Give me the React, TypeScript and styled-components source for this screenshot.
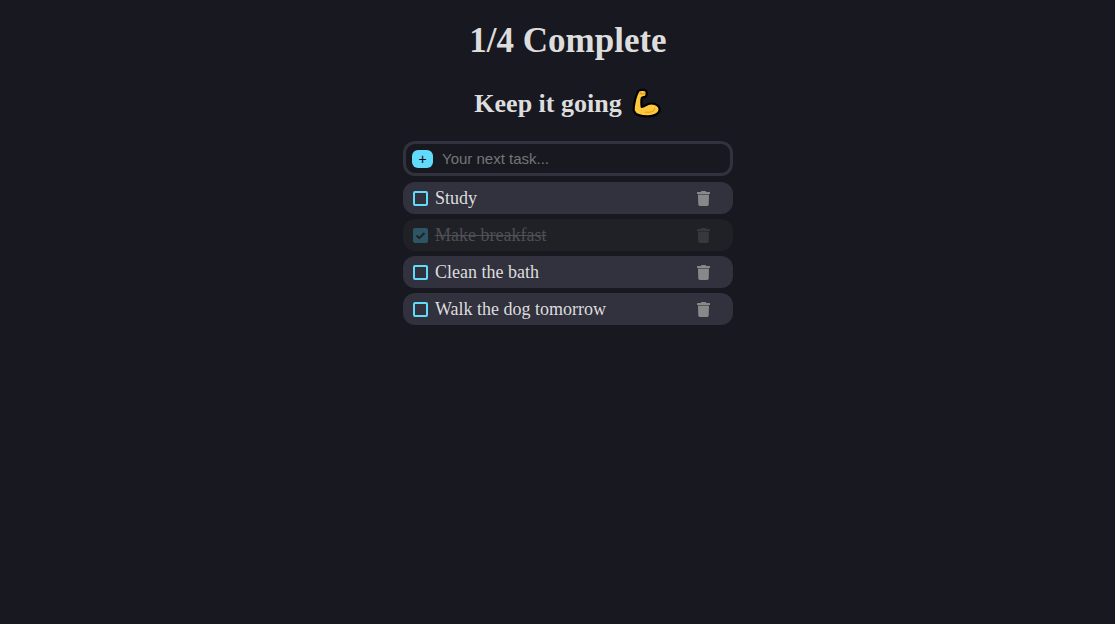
import React, { useState } from "react";
import styled, { createGlobalStyle } from "styled-components";

const GlobalStyle = createGlobalStyle`
  body {
    margin: 0;
    background: #181820;
    color: #dddddd;
    font-family: "Liberation Serif", "Times New Roman", serif;
    font-size: 18px;
  }
`;

const Page = styled.main`
  display: flex;
  flex-direction: column;
  align-items: center;
  padding: 21px 0 21px 21px;
`;

const Title = styled.h1`
  margin: 0;
  font-size: 35px;
  line-height: 40px;
`;

const Subtitle = styled.h2`
  display: flex;
  align-items: center;
  gap: 10px;
  margin: 26px 0 21px;
  font-size: 26px;
  line-height: 33px;
`;

const Panel = styled.section`
  box-sizing: border-box;
  width: 330px;
  max-width: 100%;
`;

const AddForm = styled.form`
  display: flex;
  align-items: center;
  gap: 9px;
  box-sizing: border-box;
  height: 35px;
  padding: 0 6px;
  margin-bottom: 6px;
  border: 3px solid #32313e;
  border-radius: 12px;
`;

const AddButton = styled.button`
  display: flex;
  align-items: center;
  justify-content: center;
  flex: none;
  width: 21px;
  height: 18px;
  padding: 0;
  border: 0;
  border-radius: 6px;
  background: #61dafb;
  color: #000;
  font: 14px "Liberation Sans", Arial, sans-serif;
  cursor: pointer;
`;

const TaskInput = styled.input`
  flex: 1;
  min-width: 0;
  padding: 0;
  border: 0;
  outline: 0;
  background: transparent;
  color: #dddddd;
  font: 15px "Liberation Sans", Arial, sans-serif;

  &::placeholder {
    color: #757575;
    opacity: 1;
  }
`;

const List = styled.ul`
  display: flex;
  flex-direction: column;
  gap: 5px;
  margin: 0;
  padding: 0;
  list-style: none;
`;

const Row = styled.li<{ $done: boolean }>`
  display: flex;
  align-items: center;
  box-sizing: border-box;
  min-height: 32px;
  padding: 0 23px 0 10px;
  border-radius: 12px;
  background: ${(p) => (p.$done ? "#202027" : "#32313e")};
`;

const TaskLabel = styled.label<{ $done: boolean }>`
  display: flex;
  flex: 1;
  align-items: center;
  gap: 7px;
  color: ${(p) => (p.$done ? "#4f4f54" : "#dddddd")};
  text-decoration: ${(p) => (p.$done ? "line-through" : "none")};
  line-height: 20px;
  cursor: pointer;
`;

const CheckWrap = styled.span`
  position: relative;
  display: flex;
`;

const Checkbox = styled.input`
  appearance: none;
  box-sizing: border-box;
  width: 15px;
  height: 15px;
  margin: 0;
  border: 2px solid #61dafb;
  border-radius: 2px;

  &:checked {
    border-color: #2d5664;
    background: #2d5664;
  }
`;

const CheckMark = styled.svg`
  position: absolute;
  inset: 0;
  pointer-events: none;
`;

const DeleteButton = styled.button<{ $done: boolean }>`
  display: flex;
  padding: 0;
  border: 0;
  background: transparent;
  color: ${(p) => (p.$done ? "#38383c" : "#888888")};
  cursor: pointer;
`;

function Biceps() {
  return (
    <svg width="30" height="31" viewBox="0 0 30 31" role="img" aria-label="Flexed biceps">
      <path
        d="M6.2 3.2C7.4 1.6 12.6 1.4 14 2.7C15 4 14.8 7.6 13.7 8.6C12.8 9.4 10.4 8.8 9.8 10C9.2 11.8 9.3 15.6 9.7 18.8C12.6 19 14 15.6 19.4 15.5C24.4 15.5 28 18.4 27.6 21.8C27 25.6 22.3 28.4 16 28.4C9.8 28.4 3.2 26.8 1.8 22.9C1.2 20.3 3 10.7 4.4 7.3Z"
        fill="#ffc83d"
        stroke="#000"
        strokeWidth="2.2"
        strokeLinejoin="round"
      />
      <path d="M8.2 5.2Q10.3 6.8 12.4 5.4" fill="none" stroke="#e89b16" strokeWidth="1.6" strokeLinecap="round" />
      <path d="M13.3 24.2H17.6C20.6 24 22.4 22.6 22.6 20.4" fill="none" stroke="#e29817" strokeWidth="1" strokeLinecap="round" />
    </svg>
  );
}

function TrashIcon() {
  return (
    <svg width="13" height="15" viewBox="0 0 13 15" fill="currentColor" aria-hidden="true">
      <path d="M0 1.6Q0 1 .6 1H4V.6Q4 0 4.6 0H8.4Q9 0 9 .6V1H12.4Q13 1 13 1.6V3H0Z" />
      <path d="M1 3H12V4H1Z" opacity=".45" />
      <path d="M1 4H12L11.7 13.6Q11.6 15 10.3 15H2.7Q1.4 15 1.3 13.6Z" />
    </svg>
  );
}

interface Task {
  id: number;
  name: string;
  done: boolean;
}

const initialTasks: Task[] = [
  { id: 1, name: "Study", done: false },
  { id: 2, name: "Make breakfast", done: true },
  { id: 3, name: "Clean the bath", done: false },
  { id: 4, name: "Walk the dog tomorrow", done: false },
];

export default function App() {
  const [tasks, setTasks] = useState(initialTasks);
  const [name, setName] = useState("");
  const doneCount = tasks.filter((t) => t.done).length;

  const addTask = (event: React.FormEvent) => {
    event.preventDefault();
    if (!name.trim()) return;
    setTasks([...tasks, { id: Date.now(), name: name.trim(), done: false }]);
    setName("");
  };

  const toggle = (id: number) =>
    setTasks(tasks.map((t) => (t.id === id ? { ...t, done: !t.done } : t)));

  const remove = (id: number) => setTasks(tasks.filter((t) => t.id !== id));

  return (
    <>
      <GlobalStyle />
      <Page>
        <Title>
          {`${doneCount}/${tasks.length} Complete`}
        </Title>
        <Subtitle>
          Keep it going <Biceps />
        </Subtitle>
        <Panel>
          <AddForm onSubmit={addTask}>
            <AddButton type="submit" aria-label="Add task">
              +
            </AddButton>
            <TaskInput
              aria-label="Your next task"
              placeholder="Your next task..."
              value={name}
              onChange={(e) => setName(e.target.value)}
            />
          </AddForm>
          <List>
            {tasks.map((task) => (
              <Row key={task.id} $done={task.done}>
                <TaskLabel $done={task.done} htmlFor={`task-${task.id}`}>
                  <CheckWrap>
                    <Checkbox
                      id={`task-${task.id}`}
                      type="checkbox"
                      checked={task.done}
                      onChange={() => toggle(task.id)}
                    />
                    {task.done && (
                      <CheckMark width="15" height="15" viewBox="0 0 15 15" aria-hidden="true">
                        <path d="M3.5 7.5L6.3 10.2L11.5 5" fill="none" stroke="#202027" strokeWidth="2" />
                      </CheckMark>
                    )}
                  </CheckWrap>
                  <span>{task.name}</span>
                </TaskLabel>
                <DeleteButton
                  type="button"
                  $done={task.done}
                  aria-label={`Delete ${task.name}`}
                  onClick={() => remove(task.id)}
                >
                  <TrashIcon />
                </DeleteButton>
              </Row>
            ))}
          </List>
        </Panel>
      </Page>
    </>
  );
}
